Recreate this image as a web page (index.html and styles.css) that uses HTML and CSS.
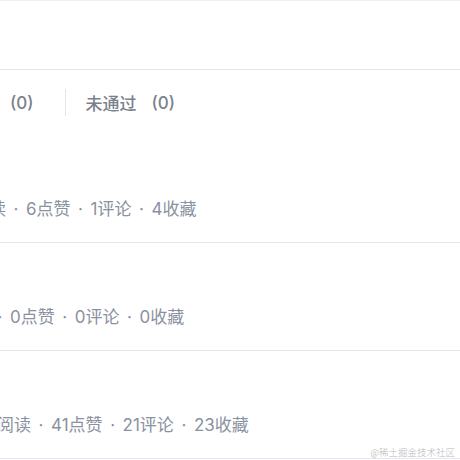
FILE: index.html
```html
<!DOCTYPE html>
<html lang="zh-CN">
<head>
<meta charset="utf-8">
<title>文章列表</title>
<link rel="stylesheet" href="styles.css">
</head>
<body>
<div class="page">
  <div class="header"></div>
  <div class="tabs">
    <div class="tab tab-first"><span class="tab-label">审核中</span><span class="tab-count">(0)</span></div>
    <div class="tab-sep"></div>
    <div class="tab"><span class="tab-label">未通过</span><span class="tab-count">(0)</span></div>
  </div>
  <div class="list">
    <div class="item">
      <div class="stats shift-a"><span class="num">1,208</span><span>阅读</span><span class="dot">·</span><span>6点赞</span><span class="dot">·</span><span>1评论</span><span class="dot">·</span><span>4收藏</span></div>
    </div>
    <div class="item">
      <div class="stats shift-b"><span class="num">326</span><span>阅读</span><span class="dot">·</span><span>0点赞</span><span class="dot">·</span><span>0评论</span><span class="dot">·</span><span>0收藏</span></div>
    </div>
    <div class="item">
      <div class="stats shift-c"><span class="num">3,457</span><span>阅读</span><span class="dot">·</span><span>41点赞</span><span class="dot">·</span><span>21评论</span><span class="dot">·</span><span>23收藏</span></div>
    </div>
  </div>
  <div class="watermark">@稀土掘金技术社区</div>
</div>
</body>
</html>
```
FILE: styles.css
```css
html, body {
  margin: 0;
  padding: 0;
  background: #ffffff;
  overflow: hidden;
}
.page {
  position: relative;
  width: 460px;
  height: 460px;
  overflow: hidden;
  font-family: Inter, "Noto Sans CJK SC", sans-serif;
}
.header {
  height: 68px;
  border-top: 1px solid #f0f0f0;
  border-bottom: 1px solid #e4e4e4;
}
.tabs {
  height: 65px;
  display: flex;
  align-items: center;
  margin-left: -56px;
  font-size: 17px;
  font-weight: 500;
  color: #7b818b;
}
.tab {
  display: flex;
  align-items: center;
  white-space: nowrap;
}
.tab-count {
  margin-left: 15px;
}
.tab-sep {
  width: 1px;
  height: 27px;
  background: #e4e6eb;
  margin-left: 31px;
  margin-right: 20px;
}
.item {
  padding-top: 62px;
  padding-bottom: 21px;
  border-bottom: 1px solid #e4e6eb;
}
.stats {
  display: flex;
  white-space: nowrap;
  font-size: 17px;
  line-height: 24px;
  color: #8a919f;
}
.num {
  display: inline-block;
  width: 60px;
  text-align: right;
}
.dot {
  display: inline-block;
  width: 20px;
  text-align: center;
}
.shift-a { margin-left: -88px; }
.shift-b { margin-left: -104px; }
.shift-c { margin-left: -63px; }
.watermark {
  position: absolute;
  right: 5px;
  bottom: 1px;
  font-family: "Noto Sans CJK SC", sans-serif;
  font-size: 9.5px;
  font-weight: 300;
  line-height: 14px;
  color: #b9b9b9;
  white-space: nowrap;
}
```
